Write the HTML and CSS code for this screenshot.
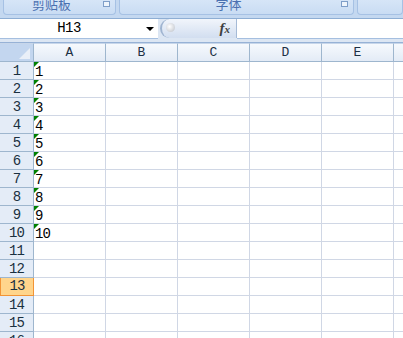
FILE: index.html
```html
<!DOCTYPE html>
<html lang="zh-CN">
<head>
  <meta charset="UTF-8">
  <title>Book1 - Excel</title>
  <link rel="stylesheet" href="styles.css">
</head>
<body>

<div class="ribbon">
  <div class="group g-clip"><span class="label">剪贴板</span><span class="launcher"></span></div>
  <div class="group g-font"><span class="label">字体</span><span class="launcher"></span></div>
  <div class="group g-align"></div>
</div>

<div class="formula-bar">
  <div class="name-box">
    <span class="name">H13</span>
    <span class="arrow"></span>
  </div>
  <div class="pill">
    <span class="knob"></span>
    <span class="fx"><i>f</i><i class="x">x</i></span>
  </div>
  <div class="formula-input"></div>
</div>

<div class="sheet" id="sheet">
  <div class="corner"><span></span></div>
  <div class="col-head">A</div>
  <div class="col-head">B</div>
  <div class="col-head">C</div>
  <div class="col-head">D</div>
  <div class="col-head">E</div>
  <div class="col-head"></div>
</div>

<script>
  const sheet = document.getElementById('sheet');
  for (let r = 1; r <= 16; r++) {
    const head = document.createElement('div');
    head.className = r === 13 ? 'row-head active' : 'row-head';
    head.textContent = r;
    sheet.appendChild(head);
    for (let c = 0; c < 6; c++) {
      const cell = document.createElement('div');
      cell.className = 'cell';
      if (c === 0 && r <= 10) {
        cell.innerHTML = '<span class="flag"></span>' + r;
      }
      sheet.appendChild(cell);
    }
  }
</script>

</body>
</html>
```

FILE: styles.css
```css
body {
  margin: 0;
  width: 403px;
  height: 338px;
  overflow: hidden;
  background: #ffffff;
  font-family: "Liberation Mono", "DejaVu Sans Mono", monospace;
}
.ribbon {
  display: flex;
  gap: 3px;
  height: 19px;
  padding-left: 3px;
  background: #c4d8f0;
  border-bottom: 1px solid #8eaed4;
  box-sizing: border-box;
  overflow: hidden;
}
.group {
  position: relative;
  height: 15px;
  box-sizing: border-box;
  border: 1px solid #a6c1e4;
  border-top: none;
  border-radius: 0 0 4px 4px;
  background: linear-gradient(#d6e5f7, #c9dcf3);
  overflow: hidden;
}
.g-clip {
  width: 113px;
}
.g-font {
  width: 235px;
}
.g-align {
  flex: 1;
}
.label {
  display: block;
  margin-top: -3px;
  padding-right: 16px;
  color: #4a70b0;
  font-family: "Noto Sans CJK SC", sans-serif;
  font-size: 13px;
  line-height: 13px;
  text-align: center;
}
.launcher {
  position: absolute;
  right: 5px;
  top: 1px;
  width: 5px;
  height: 4px;
  border: 1px solid #7f9ec8;
  background: #eef4fb;
}
.formula-bar {
  display: flex;
  height: 24px;
  background: #dce6f3;
  border-bottom: 1px solid #97b2d6;
  box-sizing: border-box;
}
.name-box {
  position: relative;
  width: 158px;
  height: 19px;
  background: #ffffff;
  border-bottom: 1px solid #a5bfe0;
}
.name {
  display: block;
  width: 138px;
  text-align: center;
  font-size: 14px;
  line-height: 19px;
  color: #000000;
  letter-spacing: -0.5px;
}
.arrow {
  position: absolute;
  left: 146px;
  top: 8px;
  border-left: 4px solid transparent;
  border-right: 4px solid transparent;
  border-top: 4px solid #000000;
}
.pill {
  position: relative;
  width: 77px;
  height: 19px;
  box-sizing: border-box;
  background: linear-gradient(#f1f5fb, #d2def0);
  border-radius: 10px 0 0 10px;
  border-left: 2px solid #9fb4d0;
  border-right: 1px solid #a5bad6;
  margin-left: 2px;
}
.knob {
  position: absolute;
  left: 4px;
  top: 4px;
  width: 9px;
  height: 9px;
  border-radius: 50%;
  background: radial-gradient(circle at 40% 40%, #ffffff, #b9bec6);
}
.fx {
  position: absolute;
  right: 6px;
  top: 1px;
  font-family: "Liberation Serif", serif;
  font-weight: bold;
  font-size: 15px;
  color: #404040;
}
.fx .x {
  font-size: 11px;
}
.formula-input {
  flex: 1;
  height: 19px;
  background: #ffffff;
  border-bottom: 1px solid #a5bfe0;
}
.sheet {
  display: grid;
  grid-template-columns: 34px 72px 72px 72px 72px 72px 72px;
  grid-template-rows: 19px;
  grid-auto-rows: 18px;
}
.corner {
  position: relative;
  background: #c3d6ef;
  border-right: 1px solid #9eb6ce;
  border-bottom: 1px solid #9eb6ce;
  border-top: 1px solid #c7d6ea;
}
.corner span {
  position: absolute;
  right: 3px;
  bottom: 2px;
  border-left: 11px solid transparent;
  border-bottom: 11px solid #e9eff8;
}
.col-head {
  background: linear-gradient(#f6f9fd, #e3ebf6);
  border-right: 1px solid #9eb6ce;
  border-bottom: 1px solid #9eb6ce;
  border-top: 1px solid #c7d6ea;
  text-align: center;
  font-size: 13px;
  line-height: 17px;
  color: #1c2f44;
}
.row-head {
  background: #e4ecf7;
  border-right: 1px solid #9eb6ce;
  border-bottom: 1px solid #9eb6ce;
  text-align: center;
  font-size: 14px;
  line-height: 18px;
  letter-spacing: -1px;
  color: #1a3040;
}
.row-head.active {
  background: #ffd58c;
  border: 1px solid #f29436;
  border-top: none;
  line-height: 17px;
}
.cell {
  position: relative;
  border-right: 1px solid #d0d7e5;
  border-bottom: 1px solid #d0d7e5;
  font-size: 14px;
  line-height: 20px;
  letter-spacing: -1px;
  padding-left: 1px;
  color: #000000;
}
.flag {
  position: absolute;
  left: 0;
  top: 0;
  border-top: 5px solid #008000;
  border-right: 5px solid transparent;
}
```
